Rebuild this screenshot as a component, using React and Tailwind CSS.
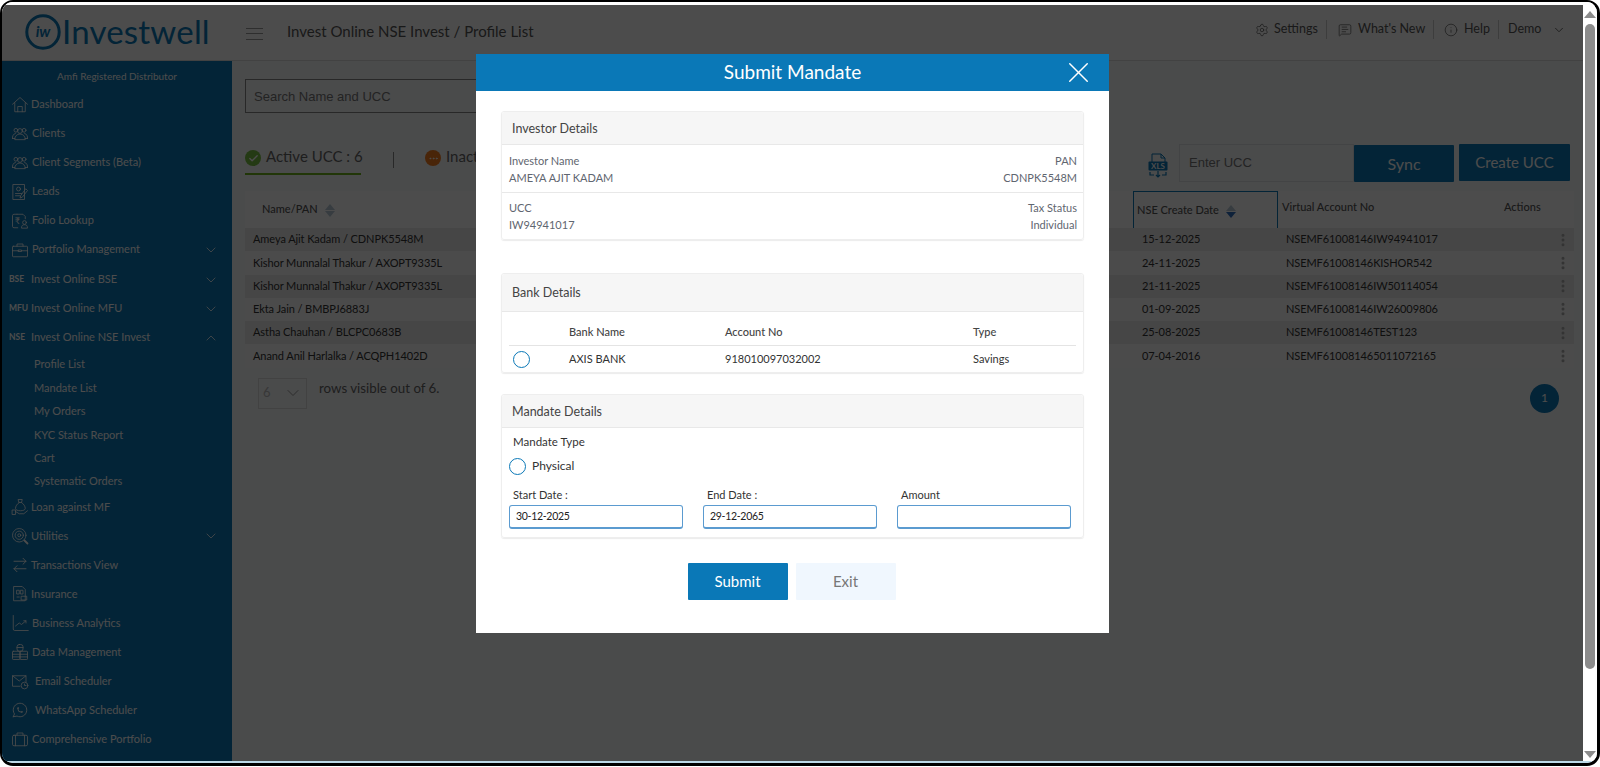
import React from "react";
import {
  ArrowRightLeft,
  ChevronDown,
  ChevronUp,
  Settings,
  MessageSquareText,
  Info,
  X,
  Check,
  Ellipsis,
  EllipsisVertical,
} from "lucide-react";
import { TbBrandWhatsapp } from "react-icons/tb";

function Ico({ children }) {
  return (
    <svg
      viewBox="0 0 24 24"
      className="w-[18px] h-[18px] shrink-0"
      fill="none"
      stroke="currentColor"
      strokeWidth="1.1"
      strokeLinecap="round"
      strokeLinejoin="round"
    >
      {children}
    </svg>
  );
}

const HomeIcon = () => (
  <Ico>
    <path d="M2 11L12 2l10 9M5 9v12h14V9M9 21v-7h6v7" />
  </Ico>
);

const ClientsIcon = () => (
  <Ico>
    <circle cx="12" cy="8" r="3.2" />
    <circle cx="6.5" cy="7" r="2.5" />
    <circle cx="17.5" cy="7" r="2.5" />
    <path d="M5 19c0-4 3-7 7-7s7 3 7 7z" />
    <path d="M2 18c-.5-3 1-6 4-7M22 18c.5-3-1-6-4-7M2 18h3M19 18h3" />
  </Ico>
);

const LeadsIcon = () => (
  <Ico>
    <path d="M3 2h15v20H3z" />
    <circle cx="10" cy="8" r="2.6" />
    <path d="M6 14h8M6 17h6" />
    <path d="M20 8l2 2-7 9-3 1 1-3z" />
  </Ico>
);

const FolioIcon = () => (
  <Ico>
    <path d="M8 3H4a2 2 0 0 0-2 2v14a2 2 0 0 0 2 2h5M8 3h8l3 3v3" />
    <text x="5" y="16" fontSize="12" fill="currentColor" stroke="none">₹</text>
    <circle cx="18" cy="14" r="2.5" />
    <path d="M14 21c0-3 1.5-4 4-4s4 1 4 4z" />
  </Ico>
);

const PortfolioIcon = () => (
  <Ico>
    <rect x="2" y="7" width="20" height="14" rx="1" />
    <path d="M8 7V4h8v3M2 13h8M14 13h8" />
    <rect x="10" y="12" width="4" height="2" />
  </Ico>
);

const LoanIcon = () => (
  <Ico>
    <path d="M10 2h5l-1 4h-3z" />
    <path d="M11 6c-3 2-5 5-5 8 0 2 3 3 6.5 3s6.5-1 6.5-3c0-3-2-6-5-8" />
    <path d="M2 16h4v6H2zM6 18l5 3h6l5-4" />
  </Ico>
);

const UtilitiesIcon = () => (
  <Ico>
    <circle cx="11" cy="11" r="9" />
    <circle cx="11" cy="11" r="5.5" />
    <circle cx="11" cy="11" r="2" />
    <path d="M18 18l4 4" strokeWidth="2.4" />
  </Ico>
);

const TransactionsIcon = () => <ArrowRightLeft className="w-[18px] h-[18px] shrink-0" strokeWidth={1.2} />;

const InsuranceIcon = () => (
  <Ico>
    <path d="M4 2h11l4 4v15H4z" />
    <path d="M8 7h3v5H8zM13 7h3v5h-3zM8 16h3" />
    <path d="M14 15h7v5h-7z" />
  </Ico>
);

const AnalyticsIcon = () => (
  <Ico>
    <path d="M3 2v18a2 2 0 0 0 2 2h18M6 16l5-4 3 2 6-5M17 9h3v3" />
  </Ico>
);

const DataIcon = () => (
  <Ico>
    <rect x="8" y="2" width="8" height="9" rx="3" />
    <rect x="2" y="11" width="10" height="11" rx="1" />
    <rect x="12" y="11" width="10" height="11" rx="1" />
    <path d="M8 6h8M2 15h10M12 15h10M2 18.500h10M12 18.500h10" />
  </Ico>
);

const EmailIcon = () => (
  <Ico>
    <path d="M12 19H2V5h18v8M2 5l9 7 9-7" />
    <circle cx="18" cy="18" r="4.500" />
    <path d="M18 16v2h2" />
  </Ico>
);

const WhatsappIcon = () => <TbBrandWhatsapp className="w-[18px] h-[18px] shrink-0" strokeWidth={1.2} />;

const CaseIcon = () => (
  <Ico>
    <rect x="2" y="7" width="20" height="14" rx="2" />
    <path d="M8 7V4h8v3M6 7v14M18 7v14" />
  </Ico>
);

const menuTop = [
  { label: "Dashboard", Icon: HomeIcon, gap: "pl-[2px]" },
  { label: "Clients", Icon: ClientsIcon, gap: "pl-[3px]" },
  { label: "Client Segments (Beta)", Icon: ClientsIcon, gap: "pl-[3px]" },
  { label: "Leads", Icon: LeadsIcon, gap: "pl-[3px]" },
  { label: "Folio Lookup", Icon: FolioIcon, gap: "pl-[3px]" },
  { label: "Portfolio Management", Icon: PortfolioIcon, gap: "pl-[3px]", arrow: true },
];

const menuOnline = [
  { label: "Invest Online BSE", tag: "BSE", arrow: true },
  { label: "Invest Online MFU", tag: "MFU", arrow: true },
  { label: "Invest Online NSE Invest", tag: "NSE", open: true },
];

const subMenu = [
  "Profile List",
  "Mandate List",
  "My Orders",
  "KYC Status Report",
  "Cart",
  "Systematic Orders",
];

const menuBottom = [
  { label: "Loan against MF", Icon: LoanIcon, gap: "pl-[2px]" },
  { label: "Utilities", Icon: UtilitiesIcon, gap: "pl-[2px]", arrow: true },
  { label: "Transactions View", Icon: TransactionsIcon, gap: "pl-[2px]" },
  { label: "Insurance", Icon: InsuranceIcon, gap: "pl-[2px]" },
  { label: "Business Analytics", Icon: AnalyticsIcon, gap: "pl-[3px]" },
  { label: "Data Management", Icon: DataIcon, gap: "pl-[3px]" },
  { label: "Email Scheduler", Icon: EmailIcon, gap: "pl-[6px]" },
  { label: "WhatsApp Scheduler", Icon: WhatsappIcon, gap: "pl-[6px]" },
  { label: "Comprehensive Portfolio", Icon: CaseIcon, gap: "pl-[3px]" },
];

const rows = [
  ["Ameya Ajit Kadam / CDNPK5548M", "15-12-2025", "NSEMF61008146IW94941017"],
  ["Kishor Munnalal Thakur / AXOPT9335L", "24-11-2025", "NSEMF61008146KISHOR542"],
  ["Kishor Munnalal Thakur / AXOPT9335L", "21-11-2025", "NSEMF61008146IW50114054"],
  ["Ekta Jain / BMBPJ6883J", "01-09-2025", "NSEMF61008146IW26009806"],
  ["Astha Chauhan / BLCPC0683B", "25-08-2025", "NSEMF61008146TEST123"],
  ["Anand Anil Harlalka / ACQPH1402D", "07-04-2016", "NSEMF610081465011072165"],
];

function MenuRow({ item }) {
  const { label, Icon, gap, arrow } = item;
  return (
    <div className="h-[29px] flex items-center pl-[9px] pr-[13px] text-[11px] text-white">
      <Icon />
      <span className={`${gap} flex-1 whitespace-nowrap`}>{label}</span>
      {arrow && <ChevronDown className="w-[16px] h-[16px]" strokeWidth={1.2} />}
    </div>
  );
}

function Sidebar() {
  return (
    <aside className="w-[230px] shrink-0 bg-[#0a78b7] overflow-hidden">
      <div className="h-[29px] pt-[8px] text-center text-[10px] leading-[14px] text-white">
        Amfi Registered Distributor
      </div>
      <nav>
        {menuTop.map((item) => (
          <MenuRow key={item.label} item={item} />
        ))}
        <div className="h-px" />
        {menuOnline.map((item) => (
          <div
            key={item.label}
            className="h-[29px] flex items-center pl-[7px] pr-[13px] text-[11px] text-white"
          >
            <span className="w-[22px] shrink-0 text-[8.5px] font-bold">{item.tag}</span>
            <span className="flex-1 whitespace-nowrap">{item.label}</span>
            {item.arrow && <ChevronDown className="w-[16px] h-[16px]" strokeWidth={1.2} />}
            {item.open && <ChevronUp className="w-[16px] h-[16px]" strokeWidth={1.2} />}
          </div>
        ))}
        <div className="pt-[1px] -mb-[1px]">
          {subMenu.map((label) => (
            <div
              key={label}
              className="h-[23.4px] flex items-center pl-[32px] text-[11px] text-white"
            >
              {label}
            </div>
          ))}
        </div>
        {menuBottom.map((item) => (
          <MenuRow key={item.label} item={item} />
        ))}
        <div className="h-[29px] flex items-center pl-[9px] text-white">
          <ClientsIcon />
        </div>
      </nav>
    </aside>
  );
}

function TopBar() {
  return (
    <header className="h-[56px] shrink-0 flex items-center bg-white border-b border-[#ddd]">
      <div className="w-[244px] shrink-0 pl-[23px] pb-[2px] flex items-center">
        <svg viewBox="0 0 36 36" className="w-[36px] h-[36px] shrink-0" fill="none">
          <circle cx="18" cy="18" r="16.2" stroke="#0a78b7" strokeWidth="3" />
          <text
            x="18"
            y="23"
            textAnchor="middle"
            fontSize="15"
            fontStyle="italic"
            fontWeight="700"
            fill="#0a78b7"
            fontFamily="Lato, sans-serif"
          >
            iw
          </text>
        </svg>
        <span className="pl-[1px] text-[33px] leading-none text-[#0a78b7] tracking-[0.2px]">
          Investwell
        </span>
      </div>
      <div className="w-[41px] shrink-0 flex flex-col gap-[4.5px] pr-[24px] pt-[2px]">
        <span className="h-px bg-[#999]" />
        <span className="h-px bg-[#999]" />
        <span className="h-px bg-[#999]" />
      </div>
      <div className="flex-1 pb-[2px] text-[15px] text-[#555] whitespace-nowrap">
        Invest Online NSE Invest / Profile List
      </div>
      <div className="flex items-center pr-[17px] pb-[6px] text-[12.500px] text-[#555] whitespace-nowrap">
        <Settings className="w-[14px] h-[14px]" strokeWidth={1.2} />
        <span className="w-[58px] pl-[5px] border-r border-[#ccc]">Settings</span>
        <MessageSquareText className="w-[14px] h-[14px] ml-[11px]" strokeWidth={1.2} />
        <span className="w-[82px] pl-[6px] border-r border-[#ccc]">What's New</span>
        <Info className="w-[14px] h-[14px] ml-[10px]" strokeWidth={1.2} />
        <span className="w-[41px] pl-[6px] border-r border-[#ccc]">Help</span>
        <span className="w-[42px] pl-[9px]">Demo</span>
        <ChevronDown className="w-[14px] h-[14px] ml-[11px]" strokeWidth={1.5} />
      </div>
    </header>
  );
}

function SortIcon({ active }) {
  return (
    <span className="inline-flex flex-col gap-[1px] ml-[7px] align-middle">
      <span className="w-0 h-0 border-x-[5px] border-x-transparent border-b-[6px] border-b-[#b8c8d8]" />
      <span
        className={`w-0 h-0 border-x-[5px] border-x-transparent border-t-[6px] ${
          active ? "border-t-[#2f6fc0]" : "border-t-[#b8c8d8]"
        }`}
      />
    </span>
  );
}

function MainContent() {
  return (
    <main className="flex-1 min-w-0 bg-[#f8fafc] pl-[13px] pr-[9px]">
      <div className="h-[18px]" />
      <div className="h-[34px] w-[400px] border border-[#888] flex items-center pl-[8px] pt-[2px] font-['Liberation_Sans'] text-[13px] text-[#777]">
        Search Name and UCC
      </div>
      <div className="h-[31px]" />
      <div className="h-[47px] flex items-start">
        <div className="w-[116px] h-[31px] flex items-start gap-[5px] pt-[2px] border-b-2 border-[#6fb51c] shrink-0">
          <span className="w-[16px] h-[16px] mt-[4px] shrink-0 rounded-full bg-[#7ac143] flex items-center justify-center">
            <Check className="w-[11px] h-[11px] text-white" strokeWidth={3} />
          </span>
          <span className="text-[15px] leading-[20px] text-[#666] whitespace-nowrap">Active UCC : 6</span>
        </div>
        <span className="w-px h-[16px] bg-[#888] ml-[32px] mt-[8px]" />
        <div className="ml-[31px] flex items-start gap-[5px] pt-[2px]">
          <span className="w-[16px] h-[16px] mt-[4px] shrink-0 rounded-full bg-[#f57c1f] flex items-center justify-center">
            <Ellipsis className="w-[11px] h-[11px] text-white" strokeWidth={2} />
          </span>
          <span className="text-[15px] leading-[20px] text-[#666] whitespace-nowrap">Inact</span>
        </div>
        <div className="flex-1" />
        <div className="flex items-start mr-[4px]">
          <svg viewBox="0 0 20 25" className="w-[20px] h-[25px] mt-[9px] mr-[11px]" fill="none" stroke="#0a78b7">
            <path d="M4 9V1h9l4 4v4M13 1v4h4" strokeWidth="1" />
            <rect x="0.5" y="8.5" width="19" height="9" rx="1" fill="#0a78b7" strokeWidth="0" />
            <text x="10" y="16" textAnchor="middle" fontSize="8" fontWeight="700" fill="#fff" stroke="none" fontFamily="Lato, sans-serif">
              XLS
            </text>
            <path d="M2 19v3h4M18 19v3h-4M10 18v6M8 22l2 2 2-2" strokeWidth="1.2" />
          </svg>
          <div className="w-[175px] h-[38px] border border-[#e0e4e8] flex items-center pl-[9px] font-['Liberation_Sans'] text-[13px] text-[#777]">
            Enter UCC
          </div>
          <button className="w-[100px] h-[37px] mt-[1px] bg-[#0a78b7] rounded-[1px] text-[16px] text-white">Sync</button>
          <button className="w-[111px] h-[37px] ml-[5px] bg-[#0a78b7] rounded-[1px] text-[15px] text-white">Create UCC</button>
        </div>
      </div>

      <div className="w-[1329px]">
        <div className="h-[37px] flex bg-white text-[11px] font-medium text-[#555]">
          <div className="w-[888px] pl-[17px] pt-[10px]">
            Name/PAN
            <SortIcon />
          </div>
          <div className="w-[145px] h-[37px] border-x border-t border-[#0a78b7] pl-[3px] pt-[10px] whitespace-nowrap">
            NSE Create Date
            <SortIcon active />
          </div>
          <div className="w-[222px] pl-[4px] pt-[8px]">Virtual Account No</div>
          <div className="pl-[4px] pt-[8px]">Actions</div>
        </div>
        {rows.map((row, index) => (
          <div
            key={row[2]}
            className={`h-[23.25px] flex items-center text-[11px] tracking-[-0.08px] text-[#333] ${
              index % 2 === 0 ? "bg-[#ebebeb]" : "bg-[#fafafa]"
            }`}
          >
            <div className="w-[897px] pl-[8px] whitespace-nowrap">{row[0]}</div>
            <div className="w-[144px]">{row[1]}</div>
            <div className="flex-1">{row[2]}</div>
            <EllipsisVertical className="w-[16px] h-[16px] mr-[3px] text-[#aaa]" strokeWidth={2.5} />
          </div>
        ))}
      </div>

      <div className="w-[1329px] flex items-start pt-[10px] pl-[13px] pr-[15px]">
        <div className="w-[49px] h-[31px] border border-[#ddd] flex items-center justify-between pl-[4px] pr-[3px] text-[13px] text-[#bbb]">
          6
          <ChevronDown className="w-[20px] h-[20px] text-[#999]" strokeWidth={1.2} />
        </div>
        <span className="pl-[12px] pt-[1px] text-[13.300px] text-[#666] flex-1">rows visible out of 6.</span>
        <span className="w-[29px] h-[29px] mt-[6px] rounded-full bg-[#0a78b7] flex items-center justify-center text-[12px] text-white">
          1
        </span>
      </div>
    </main>
  );
}

function Card({ title, headHeight, children }) {
  return (
    <section className="w-[583px] shrink-0 border border-[#eee] rounded-[3px] shadow-[0_1px_1px_rgba(0,0,0,0.08)]">
      <div
        className={`${headHeight} flex items-center pl-[10px] pt-[2px] bg-[#f6f6f6] border-b border-[#e8e8e8] rounded-t-[3px] text-[12.500px] text-[#444]`}
      >
        {title}
      </div>
      {children}
    </section>
  );
}

function Radio() {
  return <span className="block w-[17px] h-[17px] rounded-full border border-[#0a78b7] shrink-0" />;
}

function DateField({ label, value, width }) {
  return (
    <div className={width}>
      <div className="pl-[4px] pb-[2px] text-[11px] leading-[16px] text-[#333]">{label}</div>
      <div className="h-[24px] border border-[#5b9bd0] border-b-2 rounded-[3px] pl-[6px] flex items-center text-[10.500px] tracking-[-0.3px] text-[#222]">
        {value}
      </div>
    </div>
  );
}

function MandateModal() {
  return (
    <div className="absolute inset-0 bg-black/70 flex justify-center pt-[49px]">
      <div className="w-[633px] h-[579px] bg-white flex flex-col items-center">
        <div className="w-full h-[37px] shrink-0 bg-[#0a78b7] flex items-center justify-center relative text-[19px] text-white">
          Submit Mandate
          <X className="absolute right-[13px] top-[1px] w-[35px] h-[35px]" strokeWidth={1} />
        </div>

        <div className="h-[20px] shrink-0" />
        <Card title="Investor Details" headHeight="h-[33px]">
          <div className="h-[48px] flex justify-between items-center pl-[7px] pr-[6px] border-b border-[#e8e8e8] text-[11px] leading-[17px] text-[#5f6670]">
            <div>
              Investor Name
              <div>AMEYA AJIT KADAM</div>
            </div>
            <div className="text-right">
              PAN
              <div>CDNPK5548M</div>
            </div>
          </div>
          <div className="h-[46px] flex justify-between items-center pl-[7px] pr-[6px] text-[11px] leading-[17px] text-[#5f6670]">
            <div>
              UCC
              <div>IW94941017</div>
            </div>
            <div className="text-right">
              Tax Status
              <div>Individual</div>
            </div>
          </div>
        </Card>

        <div className="h-[33px] shrink-0" />
        <Card title="Bank Details" headHeight="h-[38px]">
          <div className="mx-[7px] h-[34px] flex items-end pb-[5px] border-b border-[#e4e4e4] text-[11px] font-medium text-[#444]">
            <span className="w-[60px]" />
            <span className="w-[156px]">Bank Name</span>
            <span className="w-[248px]">Account No</span>
            <span>Type</span>
          </div>
          <div className="mx-[7px] h-[26px] flex items-center text-[11px] text-[#333]">
            <span className="w-[60px] pl-[4px]">
              <Radio />
            </span>
            <span className="w-[156px]">AXIS BANK</span>
            <span className="w-[248px]">918010097032002</span>
            <span>Savings</span>
          </div>
        </Card>

        <div className="h-[21px] shrink-0" />
        <Card title="Mandate Details" headHeight="h-[33px]">
          <div className="h-[109px] pl-[7px] pr-[12px]">
            <div className="pt-[5px] pl-[4px] text-[11.500px] leading-[18px] text-[#333]">Mandate Type</div>
            <div className="flex items-center gap-[6px] pt-[6px] text-[12px] text-[#333]">
              <Radio />
              Physical
            </div>
            <div className="flex justify-between pt-[12px]">
              <DateField label="Start Date :" value="30-12-2025" width="w-[174px]" />
              <DateField label="End Date :" value="29-12-2065" width="w-[174px]" />
              <DateField label="Amount" value="" width="w-[174px]" />
            </div>
          </div>
        </Card>

        <div className="flex gap-[8px] pt-[25px] -ml-[2px]">
          <button className="w-[100px] h-[37px] bg-[#0a78b7] rounded-[1px] text-[15px] text-white">Submit</button>
          <button className="w-[100px] h-[37px] bg-[#f0f7fe] rounded-[1px] text-[15px] text-[#777]">Exit</button>
        </div>
      </div>
    </div>
  );
}

export default function App() {
  return (
    <div className="w-[1600px] h-[767px] bg-white overflow-hidden font-['Lato',sans-serif]">
      <div className="w-[1600px] h-[766px] border-[3px] border-t-2 border-l-2 border-black rounded-[13px] overflow-hidden flex flex-col bg-white">
        <div className="h-[3px] shrink-0 bg-white" />
        <div className="flex-1 min-h-0 flex">
          <div className="flex-1 min-w-0 flex flex-col relative">
            <TopBar />
            <div className="flex-1 min-h-0 flex">
              <Sidebar />
              <MainContent />
            </div>
            <MandateModal />
          </div>
          <div className="w-[14px] shrink-0 flex flex-col items-center bg-white">
            <span className="mt-[6px] w-0 h-0 border-x-[6px] border-x-transparent border-b-[7px] border-b-[#8c8c8c]" />
            <span className="mt-[6px] w-[10px] h-[645px] rounded-full bg-[#8c8c8c]" />
            <div className="flex-1" />
            <span className="mb-[3px] w-0 h-0 border-x-[6px] border-x-transparent border-t-[7px] border-t-[#8c8c8c]" />
          </div>
        </div>
        <div className="h-[2px] shrink-0 bg-[#bcd9e8]" />
      </div>
    </div>
  );
}
